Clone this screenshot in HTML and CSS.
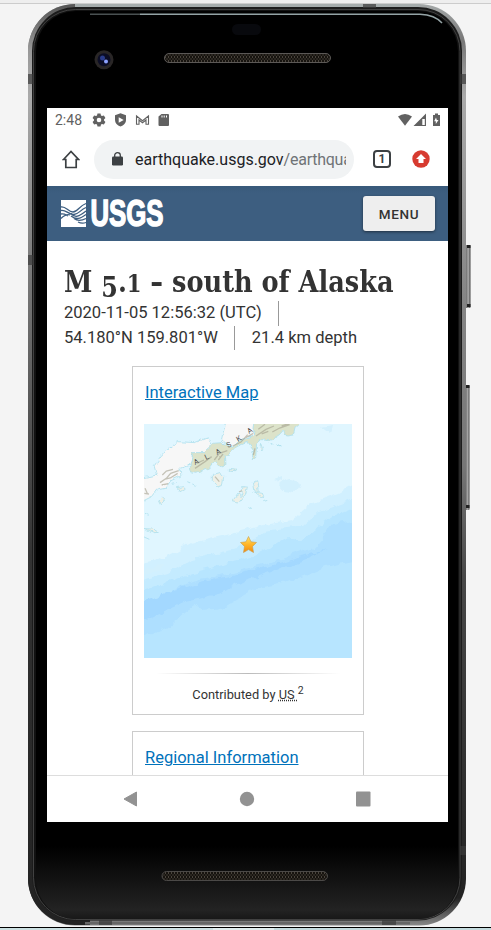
FILE: index.html
```html
<!DOCTYPE html>
<html lang="en">
<head>
<meta charset="utf-8">
<title>M 5.1 - south of Alaska</title>
<link rel="stylesheet" href="styles.css">
</head>
<body>
<div class="stage">
  <svg class="device" width="491" height="930" viewBox="0 0 491 930" aria-hidden="true">
    <defs>
      <linearGradient id="rim" x1="0" y1="0" x2="0" y2="1">
        <stop offset="0" stop-color="#a4a8a8"/><stop offset=".04" stop-color="#777"/><stop offset=".1" stop-color="#aaa"/>
        <stop offset=".32" stop-color="#858585"/><stop offset=".5" stop-color="#777"/><stop offset=".62" stop-color="#484848"/><stop offset=".97" stop-color="#222"/><stop offset="1" stop-color="#888"/>
      </linearGradient>
      <linearGradient id="rimL" x1="0" y1="0" x2="0" y2="1">
        <stop offset="0" stop-color="#555"/><stop offset=".05" stop-color="#999"/><stop offset=".1" stop-color="#aaa"/><stop offset=".3" stop-color="#777"/><stop offset=".6" stop-color="#333"/><stop offset="1" stop-color="#222"/>
      </linearGradient>
      <linearGradient id="chin" x1="0" y1="0" x2="0" y2="1">
        <stop offset="0" stop-color="#000"/><stop offset=".92" stop-color="#000"/><stop offset=".99" stop-color="#232323"/><stop offset="1" stop-color="#181818"/>
      </linearGradient>
      <linearGradient id="key" x1="0" y1="0" x2="1" y2="0">
        <stop offset="0" stop-color="#555"/><stop offset=".6" stop-color="#aaa"/><stop offset="1" stop-color="#444"/>
      </linearGradient>
      <pattern id="mesh" width="3" height="4" patternUnits="userSpaceOnUse">
        <rect width="3" height="4" fill="#16130f"/><rect width="1" height="2" fill="#4a443c"/><rect x="1.5" y="2" width="1" height="2" fill="#3d3831"/>
      </pattern>
    </defs>
    <rect width="491" height="3" fill="#eee"/><rect y="3" width="491" height="1" fill="#ccc"/>
    <rect y="927" width="491" height="1" fill="#000"/>
    <rect y="928" width="213" height="2" fill="#cbdfe1"/><rect x="213" y="928" width="61" height="2" fill="#dfeced"/><rect x="274" y="928" width="217" height="2" fill="#c3dadd"/>
    <rect x="465" y="245" width="5.500" height="63" rx="1" fill="url(#key)"/><rect x="467" y="245" width="3.500" height="3" fill="#222"/><rect x="467" y="304" width="3.500" height="3" fill="#222"/>
    <rect x="465" y="385" width="4.500" height="125" rx="1" fill="url(#key)"/><rect x="466" y="385" width="3.500" height="3" fill="#222"/><rect x="466" y="505" width="3.500" height="3" fill="#222"/>
    <rect x="28" y="4" width="438" height="921.500" rx="47" fill="url(#rim)"/>
    <path d="M75 4H90V925H75A47 47 0 0 1 28 878V51A47 47 0 0 1 75 4Z" fill="url(#rimL)"/>
    <rect x="75" y="4" width="345" height="3" fill="#a5acac"/>
    <rect x="32" y="7" width="430" height="913.500" rx="44" fill="#1c1c1c"/>
    <rect x="33.500" y="9.500" width="426.500" height="910" rx="42" fill="#111" stroke="#555" stroke-width=".7"/>
    <rect x="36" y="11" width="422" height="908" rx="40" fill="url(#chin)"/>
    <path d="M90 14.300H420Q435 15 442 23" fill="none" stroke="#94a3a5" stroke-width="1.500"/>
    <rect x="90" y="13" width="50" height="3" fill="#000" opacity=".5"/>
    <rect x="85" y="922" width="325" height="2.500" fill="#666"/>
    <path d="M99 920h13v5h-13zM382 920h14v5h-14zM363 4h13v4h-13zM28 74h6v10h-6zM460 74h6v10h-6zM28 255h6v10h-6zM460 846h6v9h-6z" fill="#3b3b3b" opacity=".7"/>
    <rect x="232" y="24" width="29" height="11" rx="5.500" fill="#08090d"/>
    <circle cx="104" cy="59.700" r="9.500" fill="#292626"/><circle cx="104" cy="59.700" r="6.500" fill="#0b0d25"/><circle cx="102.500" cy="58" r="2.500" fill="#293b8a"/><circle cx="106" cy="61.500" r="2" fill="#8da2ff"/>
    <rect x="164.500" y="53.500" width="166" height="9" rx="4.500" fill="url(#mesh)" stroke="#5b5856"/>
    <rect x="162" y="871.500" width="165.500" height="9" rx="4.500" fill="url(#mesh)" stroke="#4b4947"/>
  </svg>

  <div class="screen">
    <div class="status">
      <span class="clock">2:48</span>
      <svg width="76" height="14" viewBox="0 0 76 14" class="status-left">
        <g fill="#616161">
          <path fill-rule="evenodd" d="M4.500.5h3l.5 1.900 1 .6 1.900-.6 1.500 2.700L11 6.500v1l1.400 1.400-1.500 2.700L9 11l-1 .6-.5 1.900h-3L4 11.600 3 11l-1.900.6-1.500-2.700L1 7.500v-1L-.4 5.100l1.500-2.700L3 3l1-.6zM6 4.700a2.300 2.300 0 1 0 0 4.600 2.300 2.300 0 0 0 0-4.600z"/>
          <path fill-rule="evenodd" d="M27.500.3 22 2.300V7c0 3 2.300 5.500 5.500 6.600C30.700 12.500 33 10 33 7V2.300zM25.700 4.200l5 2.800-5 2.800z"/>
          <path d="M65.500 3.500 68.500 1H75q1 0 1 1v10q0 1-1 1h-8.500q-1 0-1-1z"/>
        </g>
        <path d="M43.500 11.300V3l6 4.700 6-4.700v8.300H53V7L49.500 9.800 46 7v4.300z" fill="none" stroke="#616161" stroke-width="1.100"/>
        <path d="M69 2.500v2M71.200 2.500v2M73.500 2.500v2" stroke="#fff" stroke-width="1"/>
      </svg>
      <svg class="status-right" width="43" height="14" viewBox="0 0 43 14" fill="#616161">
        <path d="M0 3.500Q7-1.700 14 3.500L7 12.700z"/>
        <path fill-rule="evenodd" d="M28 .5V13H15.500zM26.800 6v6h-2.500V6z"/>
        <path fill-rule="evenodd" d="M35 2h2V.5h3V2h2v11h-7zM38 4.500l-1.800 3.700h1.600V11L40.500 7H38.800z"/>
      </svg>
    </div>

    <div class="toolbar">
      <svg class="home" width="18" height="19" viewBox="0 0 18 19"><path d="M1.500 9.500 9 1.500l7.500 8h-2.300v8H3.800v-8z" fill="none" stroke="#3c4043" stroke-width="1.700"/></svg>
      <div class="omnibox">
        <svg width="11" height="14" viewBox="0 0 11 14"><rect y="4.500" width="11" height="9" rx="1.200" fill="#3c4043"/><path d="M2.700 5V3.300a2.800 2.600 0 0 1 5.600 0V5" fill="none" stroke="#3c4043" stroke-width="1.300"/></svg>
        <div class="url">earthquake.usgs.gov<span>/earthqua</span></div>
      </div>
      <div class="tabs">1</div>
      <svg class="update" width="18" height="18" viewBox="0 0 18 18"><circle cx="9" cy="9" r="8.700" fill="#d73b30"/><path d="M9 4 14 9h-2.500v4h-5V9H4z" fill="#fff"/></svg>
    </div>

    <header class="site-header">
      <svg class="logo" width="110" height="38" viewBox="0 -4 110 38" role="img" aria-label="USGS">
        <rect y="1" width="25" height="27" fill="#fff"/>
        <path d="M0 8C5 7 7 13 12 13S18 7 25 4.500M0 11.500C5 10.500 8 16 13 15.500S19 11 25 8.500M0 15c4-.5 5 1 7 2M10 14.500c4 5 8 3 15-2.500M10 17c5 4 9 3 15-1.500M13 19.500c4 3 8 2 12 0M17 23q4 2 8 .5M0 19.500q5-5 9-3.500" fill="none" stroke="#3d5e80" stroke-width="1.300"/>
        <text x="29.500" y="27.300" textLength="73" lengthAdjust="spacingAndGlyphs">USGS</text>
      </svg>
      <button class="menu">MENU</button>
    </header>

    <main>
      <h1>M <span class="five">5</span>.<span class="one">1</span> <span class="dash">-</span> south of Alaska</h1>
      <ul class="facts">
        <li>2020-11-05 12:56:32 (UTC)</li>
        <li>54.180°N 159.801°W</li>
        <li>21.4 km depth</li>
      </ul>

      <section class="card">
        <a href="#">Interactive Map</a>
        <svg class="map" width="208" height="234" viewBox="0 0 208 234">
          <defs>
            <linearGradient id="star" x1="0" y1="0" x2="0" y2="1"><stop offset="0" stop-color="#ffe46a"/><stop offset=".5" stop-color="#ffb52a"/><stop offset="1" stop-color="#f18a12"/></linearGradient>
            <filter id="rough" x="-5%" y="-5%" width="110%" height="110%" color-interpolation-filters="sRGB"><feTurbulence type="fractalNoise" baseFrequency=".09" numOctaves="3" seed="4"/><feDisplacementMap in="SourceGraphic" scale="9" xChannelSelector="R" yChannelSelector="G"/></filter>
            <filter id="coast" x="-5%" y="-5%" width="110%" height="110%" color-interpolation-filters="sRGB"><feTurbulence type="fractalNoise" baseFrequency=".16" numOctaves="2" seed="8"/><feDisplacementMap in="SourceGraphic" scale="5" xChannelSelector="R" yChannelSelector="G"/></filter>
          </defs>
          <rect width="208" height="234" fill="#e0f6ff"/>
          <g filter="url(#rough)">
            <path d="M-9 142 20 134 47 119 91 109 121 101 148 96 168 79 194 69 220 55V250H-9z" fill="#d1f0ff"/>
            <path d="M-9 158 24 149 48 134 92 125 120 108 158 103 175 88 220 71V250H-9z" fill="#c4ebff"/>
            <path d="M-9 170 48 149 108 133 145 112 158 116 188 93 220 80V250H-9z" fill="#b7e5ff"/>
            <path d="M-9 184 48 158 121 140 170 124 190 100 220 93V135L181 143 141 159 114 164 81 183 61 186 51 181 24 203-9 216z" fill="#aedfff"/>
            <path d="M-9 180 48 161 81 153 121 143 154 133 184 125 168 132 141 143 91 161 78 169 41 178-9 200z" fill="#a3d8ff"/>
            <path d="M136 60q10-8 15-3l4 8-10 5zM178 4l10-2-2 8zM3 145l16-4-4 7-15 3zM130 55l8-3v6z" fill="#d3f0fd"/>
          </g>
          <g filter="url(#coast)" stroke="#afe0ed">
            <g transform="translate(-19 -64) scale(.3333)" stroke-width="2.500">
              <path d="M50 355 95 345 88 320 120 275 160 245 210 248 245 234 262 258 235 278 205 280 195 315 165 325 168 348 138 362 120 385 95 390 80 410 50 425zM290 240 303 180 400 180 385 225 345 242 320 262z" fill="#f7f7f7"/>
              <path d="M205 278 235 278 265 250 290 248 320 262 345 242 385 225 390 180 535 180 510 202 505 225 485 228 478 208 462 225 438 240 412 237 395 252 392 293 378 302 386 272 367 247 335 260 315 282 298 288 300 314 286 320 270 302 250 325 215 340 198 335 195 312z" fill="#dce3ca"/>
              <path d="M262 344 285 338 296 350 292 377 276 381 262 362zM313 328l19 2-2 5-17-2zM324 425l15-23 10 8 5-30 13 2-6 22-20 25zM385 367l10-5 5 30-10 2zM386 397l25 3 5 13-15-5zM102 420l10-10 10 10-13 14zM157 383l16-3 8 7-16 8zM140 370l15-3M60 506l22 1 20 10-15 1zM55 530l18 8M410 253l5 14-8 2zM430 250l12 2zM457 255l12 6zM418 425l12-4M370 440l10 5M187 362l9 4M202 372l10 4M57 460l14 6" fill="#edf0e8"/>
            </g>
          </g>
          <g transform="translate(-19 -64) scale(.3333)" fill="none" stroke="#a5a18f" stroke-width="4" opacity=".6" filter="url(#coast)">
            <path d="M105 368l20-14 12-14 24-8M112 345l12-12 20-5M118 358l18-4 22-14M60 385l8 18M58 400l14 2M210 325l30-20 20-15M215 310l22-10M268 300l15-20 24-8M280 300l14-18M323 258l25-12 20-22M350 240l35-20M393 228l30-20 24-10M400 208l20-15M410 222l20-8M442 216l22-12 30-10M470 198l24-8M385 285l5-20M270 350l13 15M342 396l9-4M110 375l20-4"/>
          </g>
          <g class="map-label"><text transform="translate(51 41) rotate(-24)">A</text><text transform="translate(62 36) rotate(-25)">L</text><text transform="translate(73 31) rotate(-26)">A</text><text transform="translate(84 24) rotate(-27)">S</text><text transform="translate(94 18) rotate(-30)">K</text><text transform="translate(105 10) rotate(-32)">A</text></g>
          <path d="M104.500 112.500 107 117.800 112.500 118.500 108.500 122.400 109.500 128.500 104.500 125.600 99.500 128.500 100.500 122.400 96.500 118.500 102 117.800z" fill="url(#star)" stroke="#c99a48" stroke-width=".6"/>
        </svg>
        <hr>
        <p>Contributed by <abbr>US </abbr><sup>2</sup></p>
      </section>
      <section class="card"><a href="#">Regional Information</a></section>
    </main>

    <nav class="sysnav">
      <svg width="15" height="16" viewBox="0 0 15 16"><path d="M13.500 1v14L1 8z" fill="#929292" stroke="#929292" stroke-linejoin="round"/></svg>
      <svg width="16" height="16" viewBox="0 0 16 16"><circle cx="8" cy="8" r="7.200" fill="#929292"/></svg>
      <svg width="15" height="16" viewBox="0 0 15 16"><rect y=".5" width="14.500" height="15" rx="1" fill="#929292"/></svg>
    </nav>
  </div>
</div>
</body>
</html>
```
FILE: styles.css
```css
* { box-sizing: border-box; }
body { margin: 0; background: #f4f4f4; font-family: Roboto, sans-serif; color: #333; }
.stage { position: relative; width: 491px; height: 930px; padding: 108px 43px 0 47px; overflow: hidden; }
.device { position: absolute; inset: 0; }
.screen { position: relative; width: 401px; height: 714px; background: #fff; overflow: hidden; display: flex; flex-direction: column; }
svg { display: block; flex: none; }

.status { flex: none; height: 24px; padding: 0 7px 0 8px; display: flex; align-items: center; }
.status-left { overflow: visible; }
.clock { width: 38px; font-size: 14px; color: #616161; white-space: nowrap; }
.status-right { margin-left: auto; }

.toolbar { flex: none; height: 54px; padding: 0 18px 0 15px; display: flex; align-items: center; }
.omnibox { width: 260px; height: 39px; margin-left: 14px; padding: 0 8px 0 18px; border-radius: 20px; background: #f1f3f4; display: flex; align-items: center; gap: 12px; }
.url { flex: 1; min-width: 0; overflow: hidden; white-space: nowrap; font-size: 16px; line-height: 24px; color: #202124; position: relative; top: 1px; }
.url span { color: #6f7377; letter-spacing: -.25px; }
.tabs { width: 18px; height: 18px; margin-left: 19px; border: 2px solid #3c4043; border-radius: 4px; font-size: 12px; font-weight: 700; line-height: 14px; text-align: center; color: #3c4043; }
.update { margin-left: auto; }

.site-header { flex: none; height: 55px; padding: 0 13px 0 14px; display: flex; align-items: center; justify-content: space-between; background: linear-gradient(#38597a, #3d5e80 7px); }
.logo text { font: 700 36px "Liberation Sans", sans-serif; fill: #fff; stroke: #fff; stroke-width: 1.500px; }
.menu { width: 72px; height: 35px; padding: 0; border: 0; border-radius: 3px; background: #eee; box-shadow: 0 1px 3px rgba(0, 0, 0, .5); font: 500 13.500px Roboto, sans-serif; letter-spacing: .7px; color: #333; }

main { flex: 1; min-height: 0; overflow: hidden; padding: 23px 17px 0; display: flex; flex-direction: column; }
h1 { flex: none; margin: 0; height: 37px; font: 700 29px/37px "DejaVu Serif Condensed", "DejaVu Serif", serif; font-stretch: condensed; white-space: nowrap; transform: scaleX(.982); transform-origin: 0 0; color: #333; }
.five, .one { display: inline-block; font-size: 24px; line-height: 20px; }
.five { font-size: 27px; transform: translateY(5px); }
.dash { display: inline-block; transform: scaleX(1.250); margin: 0 1px; }
.facts { flex: none; margin: 0 0 16px; padding: 0; list-style: none; display: flex; flex-wrap: wrap; font-size: 16.550px; line-height: 24.500px; white-space: nowrap; }
.facts li { margin-right: 17px; padding-right: 16px; border-right: 1px solid #999; }
.facts li:last-child { margin: 0; padding: 0; border: 0; }
.card { flex: none; width: 232px; height: 349px; margin: 0 auto 16px 68px; padding: 14px 11px 0; border: 1px solid #ccc; }
.card a { display: block; margin-left: 1px; font-size: 16.500px; line-height: 24px; color: #0072bb; text-decoration: underline; white-space: nowrap; }
.map { margin-top: 19px; }
.map-label { font: 7.500px Roboto, sans-serif; fill: #555; }
.card hr { height: 1px; margin: 15px 12px; border: 0; background: linear-gradient(90deg, transparent, #bbb, transparent); }
.card p { margin: 0; font-size: 12.800px; line-height: 12px; text-align: center; white-space: nowrap; }
.card abbr { text-decoration: underline dotted; white-space: pre; }
.card sup { font-size: 10.500px; line-height: 0; }

.sysnav { flex: none; height: 47px; padding: 0 77px 0 76px; border-top: 1px solid #ddd; display: flex; align-items: center; justify-content: space-between; background: #fff; }
```
